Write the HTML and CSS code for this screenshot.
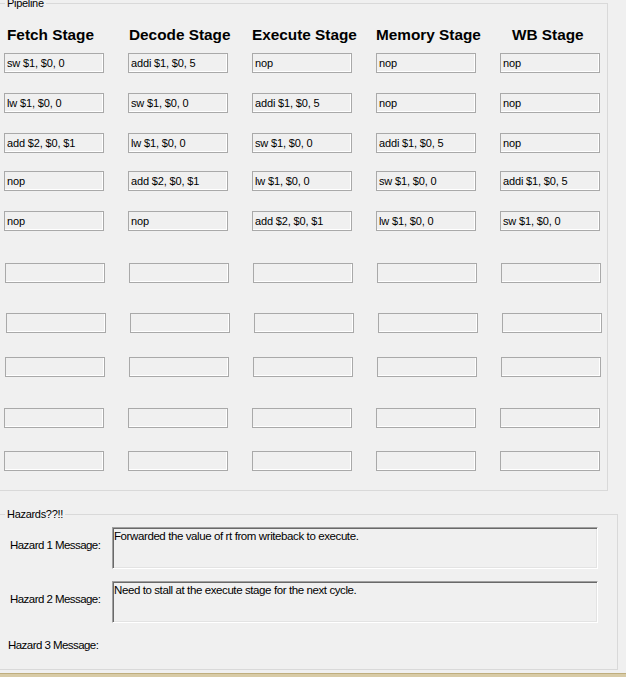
FILE: index.html
```html
<!DOCTYPE html>
<html>
<head>
<meta charset="utf-8">
<title>Pipeline</title>
<link rel="stylesheet" href="styles.css">
</head>
<body>
<div class="window">
  <fieldset class="group pipeline">
    <legend class="group-title">Pipeline</legend>
    <div class="stage-grid headings">
      <div class="stage-title t-fetch">Fetch Stage</div>
      <div class="stage-title t-decode">Decode Stage</div>
      <div class="stage-title t-exec">Execute Stage</div>
      <div class="stage-title t-mem">Memory Stage</div>
      <div class="stage-title t-wb">WB Stage</div>
    </div>
    <div class="rows">
      <div class="stage-grid row r1">
        <input class="cell" type="text" readonly value="sw $1, $0, 0">
        <input class="cell" type="text" readonly value="addi $1, $0, 5">
        <input class="cell" type="text" readonly value="nop">
        <input class="cell" type="text" readonly value="nop">
        <input class="cell" type="text" readonly value="nop">
      </div>
      <div class="stage-grid row r2">
        <input class="cell" type="text" readonly value="lw $1, $0, 0">
        <input class="cell" type="text" readonly value="sw $1, $0, 0">
        <input class="cell" type="text" readonly value="addi $1, $0, 5">
        <input class="cell" type="text" readonly value="nop">
        <input class="cell" type="text" readonly value="nop">
      </div>
      <div class="stage-grid row r3">
        <input class="cell" type="text" readonly value="add $2, $0, $1">
        <input class="cell" type="text" readonly value="lw $1, $0, 0">
        <input class="cell" type="text" readonly value="sw $1, $0, 0">
        <input class="cell" type="text" readonly value="addi $1, $0, 5">
        <input class="cell" type="text" readonly value="nop">
      </div>
      <div class="stage-grid row r4">
        <input class="cell" type="text" readonly value="nop">
        <input class="cell" type="text" readonly value="add $2, $0, $1">
        <input class="cell" type="text" readonly value="lw $1, $0, 0">
        <input class="cell" type="text" readonly value="sw $1, $0, 0">
        <input class="cell" type="text" readonly value="addi $1, $0, 5">
      </div>
      <div class="stage-grid row r5">
        <input class="cell" type="text" readonly value="nop">
        <input class="cell" type="text" readonly value="nop">
        <input class="cell" type="text" readonly value="add $2, $0, $1">
        <input class="cell" type="text" readonly value="lw $1, $0, 0">
        <input class="cell" type="text" readonly value="sw $1, $0, 0">
      </div>
      <div class="stage-grid row r6">
        <input class="cell" type="text" readonly value="">
        <input class="cell" type="text" readonly value="">
        <input class="cell" type="text" readonly value="">
        <input class="cell" type="text" readonly value="">
        <input class="cell" type="text" readonly value="">
      </div>
      <div class="stage-grid row r7">
        <input class="cell" type="text" readonly value="">
        <input class="cell" type="text" readonly value="">
        <input class="cell" type="text" readonly value="">
        <input class="cell" type="text" readonly value="">
        <input class="cell" type="text" readonly value="">
      </div>
      <div class="stage-grid row r8">
        <input class="cell" type="text" readonly value="">
        <input class="cell" type="text" readonly value="">
        <input class="cell" type="text" readonly value="">
        <input class="cell" type="text" readonly value="">
        <input class="cell" type="text" readonly value="">
      </div>
      <div class="stage-grid row r9">
        <input class="cell" type="text" readonly value="">
        <input class="cell" type="text" readonly value="">
        <input class="cell" type="text" readonly value="">
        <input class="cell" type="text" readonly value="">
        <input class="cell" type="text" readonly value="">
      </div>
      <div class="stage-grid row r10">
        <input class="cell" type="text" readonly value="">
        <input class="cell" type="text" readonly value="">
        <input class="cell" type="text" readonly value="">
        <input class="cell" type="text" readonly value="">
        <input class="cell" type="text" readonly value="">
      </div>
    </div>
  </fieldset>

  <fieldset class="group hazards">
    <legend class="group-title">Hazards??!!</legend>
    <div class="hazard-grid">
      <label class="hazard-label">Hazard 1 Message:</label>
      <textarea class="hazard-text" readonly>Forwarded the value of rt from writeback to execute.</textarea>
      <label class="hazard-label">Hazard 2 Message:</label>
      <textarea class="hazard-text" readonly>Need to stall at the execute stage for the next cycle.</textarea>
      <label class="hazard-label last">Hazard 3 Message:</label>
    </div>
  </fieldset>
  <div class="frame-bottom"></div>
</div>
</body>
</html>
```

FILE: styles.css
```css
html, body {
  margin: 0;
  padding: 0;
  background: #f0f0f0;
  overflow: hidden;
}

body {
  font-family: "Liberation Sans", Arial, sans-serif;
  color: #000;
}

.window {
  width: 626px;
  height: 677px;
  display: flex;
  flex-direction: column;
}

/* group boxes */
.group {
  margin: 0 0 0 -2px;
  padding: 0 0 0 5px;
  border: 1px solid #d9d9d9;
  min-width: 0;
  box-sizing: border-box;
}

.group-title {
  margin-left: 1px;
  padding: 0 2px;
  font-size: 11px;
  line-height: 13px;
  letter-spacing: -0.3px;
  color: #000;
}

.pipeline {
  margin-top: -3px;
  width: 610px;
  padding-bottom: 19px;
}

.stage-grid {
  display: grid;
  grid-template-columns: repeat(5, 100px);
  column-gap: 24px;
}

.headings {
  padding-top: 16px;
}

.stage-title {
  font-size: 15.35px;
  line-height: 18px;
  font-weight: bold;
  white-space: nowrap;
}

.t-fetch { padding-left: 3px; }
.t-decode { padding-left: 1px; }
.t-exec { padding-left: 0; }
.t-mem { padding-left: 0; }
.t-wb { padding-left: 12px; }

.rows {
  display: flex;
  flex-direction: column;
}

.r1 { margin-top: 9px; }
.r2 { margin-top: 20px; }
.r3 { margin-top: 20px; }
.r4 { margin-top: 18px; }
.r5 { margin-top: 20px; }
.r6 { margin-top: 32px; padding-left: 1px; }
.r7 { margin-top: 30px; padding-left: 2px; }
.r8 { margin-top: 24px; padding-left: 1px; }
.r9 { margin-top: 31px; }
.r10 { margin-top: 23px; }

.cell {
  box-sizing: border-box;
  width: 100px;
  height: 20px;
  margin: 0;
  padding: 0 2px;
  border: 1px solid #a9a9a9;
  box-shadow: inset -1px -1px 0 #ffffff;
  background: #f0f0f0;
  font-family: "Liberation Sans", Arial, sans-serif;
  font-size: 11px;
  letter-spacing: -0.15px;
  line-height: 18px;
  color: #000;
  outline: none;
}

/* hazards */
.hazards {
  margin-top: 17px;
  width: 620px;
  padding-bottom: 16.6px;
}

.hazard-grid {
  display: grid;
  grid-template-columns: 108px 486px;
  padding-top: 6px;
  row-gap: 12px;
}

.hazard-label {
  align-self: start;
  margin-top: 12px;
  padding-left: 6px;
  font-size: 11.5px;
  line-height: 13px;
  letter-spacing: -0.55px;
  white-space: nowrap;
}

.hazard-label.last {
  margin-top: 4.2px;
  padding-left: 4px;
}

.hazard-text {
  box-sizing: border-box;
  width: 486px;
  height: 42px;
  margin: 0;
  padding: 1px 1px;
  resize: none;
  overflow: hidden;
  border-style: solid;
  border-width: 1px;
  border-color: #a0a0a0 #ffffff #ffffff #a0a0a0;
  box-shadow: inset 1px 1px 0 #696969, inset -1px -1px 0 #e3e3e3;
  background: #f0f0f0;
  font-family: "Liberation Sans", Arial, sans-serif;
  font-size: 11.5px;
  line-height: 14px;
  letter-spacing: -0.4px;
  color: #000;
  outline: none;
}

.frame-bottom {
  margin-top: 3px;
  flex: 1;
  background: #d8cba6;
  border-top: 1px solid #bfae7e;
}
```
